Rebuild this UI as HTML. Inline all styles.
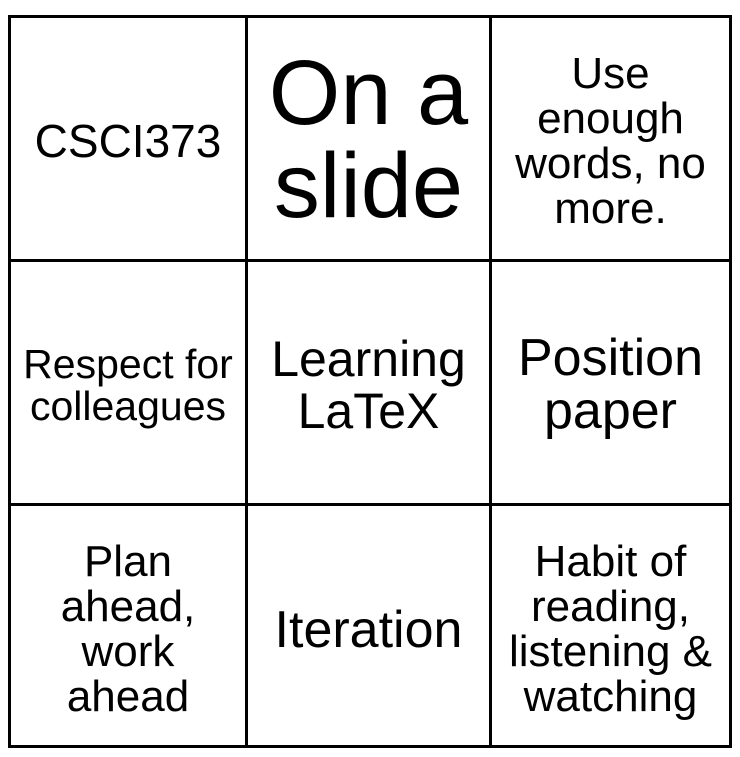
<!DOCTYPE html>
<html><head><meta charset="utf-8"><style>
html,body{margin:0;padding:0;background:#fff;width:740px;height:757px;overflow:hidden}
.l{position:absolute;background:#000}
.c{position:absolute;display:flex;align-items:center;justify-content:center;text-align:center;font-family:"Liberation Sans",sans-serif;color:#000;box-sizing:border-box;padding-top:5px}
</style></head><body>
<div class="l" style="left:8px;top:15px;width:724px;height:3px"></div>
<div class="l" style="left:8px;top:259px;width:724px;height:3px"></div>
<div class="l" style="left:8px;top:503px;width:724px;height:3px"></div>
<div class="l" style="left:8px;top:745px;width:724px;height:3px"></div>
<div class="l" style="left:8px;top:15px;width:3px;height:733px"></div>
<div class="l" style="left:245px;top:15px;width:3px;height:733px"></div>
<div class="l" style="left:489px;top:15px;width:3px;height:733px"></div>
<div class="l" style="left:729px;top:15px;width:3px;height:733px"></div>

<div class="c" style="left:11px;top:18px;width:234px;height:241px;font-size:46px;line-height:46px">CSCI373</div>
<div class="c" style="left:248px;top:18px;width:241px;height:241px;font-size:92px;line-height:93px;padding-top:2px">On a<br>slide</div>
<div class="c" style="left:492px;top:18px;width:237px;height:241px;font-size:44px;line-height:45px">Use<br>enough<br>words, no<br>more.</div>

<div class="c" style="left:11px;top:262px;width:234px;height:241px;font-size:41px;line-height:42px">Respect for<br>colleagues</div>
<div class="c" style="left:248px;top:262px;width:241px;height:241px;font-size:50px;line-height:52px">Learning<br>LaTeX</div>
<div class="c" style="left:492px;top:262px;width:237px;height:241px;font-size:52px;line-height:53px">Position<br>paper</div>

<div class="c" style="left:11px;top:506px;width:234px;height:239px;font-size:44px;line-height:45px;padding-top:7px">Plan<br>ahead,<br>work<br>ahead</div>
<div class="c" style="left:248px;top:506px;width:241px;height:239px;font-size:52px;line-height:52px;padding-top:9px">Iteration</div>
<div class="c" style="left:492px;top:506px;width:237px;height:239px;font-size:44px;line-height:45px;padding-top:7px">Habit of<br>reading,<br>listening &amp;<br>watching</div>
</body></html>
